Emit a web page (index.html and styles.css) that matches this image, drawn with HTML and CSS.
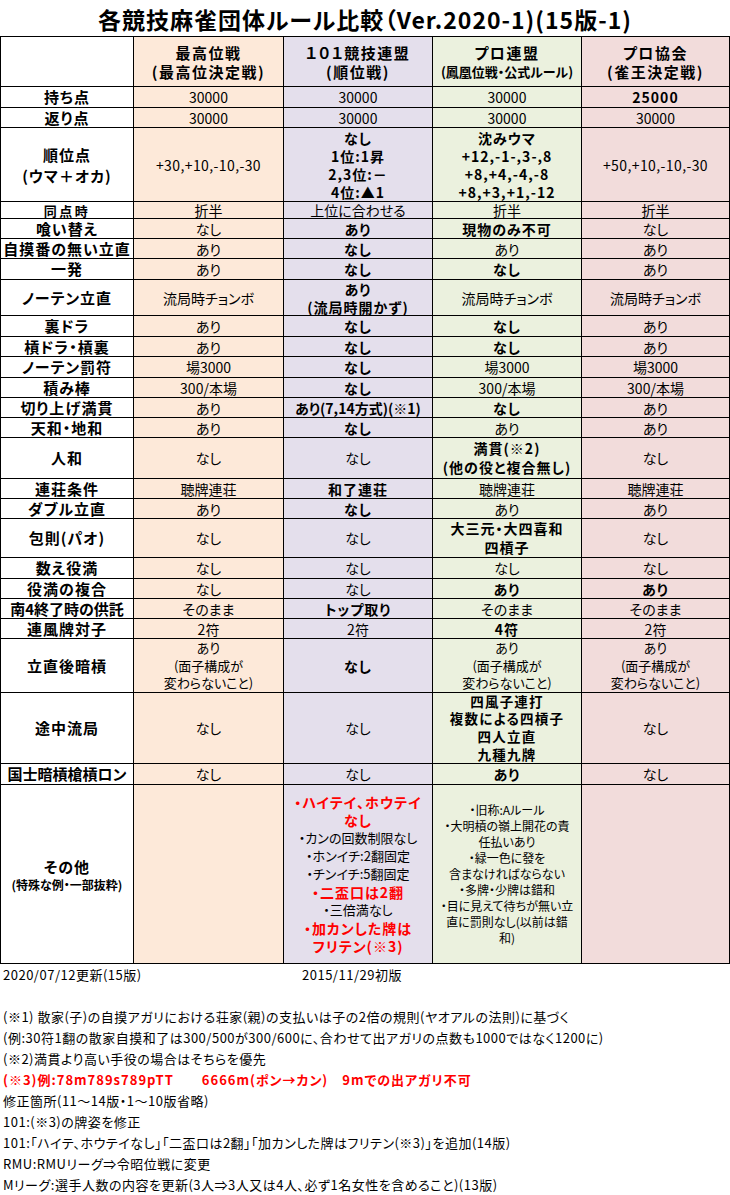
FILE: index.html
```html
<!DOCTYPE html>
<html lang="ja">
<head>
<meta charset="utf-8">
<title>各競技麻雀団体ルール比較</title>
<link rel="stylesheet" href="styles.css">
</head>
<body>
<h1 class="title">各競技麻雀団体ルール比較（Ver.2020-1)(15版-1)</h1>
<div class="sheet">
  <div class="cell lab"></div>
  <div class="cell c1 head"><span>最高位戦</span><span>(最高位決定戦)</span></div>
  <div class="cell c2 head"><span>１０１競技連盟</span><span>(順位戦)</span></div>
  <div class="cell c3 head"><span>プロ連盟</span><span class="small">(鳳凰位戦・公式ルール)</span></div>
  <div class="cell c4 head"><span>プロ協会</span><span>(雀王決定戦)</span></div>

  <div class="cell lab">持ち点</div>
  <div class="cell c1">30000</div>
  <div class="cell c2">30000</div>
  <div class="cell c3">30000</div>
  <div class="cell c4 b">25000</div>

  <div class="cell lab">返り点</div>
  <div class="cell c1">30000</div>
  <div class="cell c2">30000</div>
  <div class="cell c3">30000</div>
  <div class="cell c4">30000</div>

  <div class="cell lab lh20"><span>順位点</span><span>(ウマ＋オカ)</span></div>
  <div class="cell c1 num">+30,+10,-10,-30</div>
  <div class="cell c2 b"><span>なし</span><span>1位:1昇</span><span>2,3位:－</span><span>4位:▲1</span></div>
  <div class="cell c3 b"><span>沈みウマ</span><span>+12,-1-,3-,8</span><span>+8,+4,-4,-8</span><span>+8,+3,+1,-12</span></div>
  <div class="cell c4 num">+50,+10,-10,-30</div>

  <div class="cell lab short">同点時</div>
  <div class="cell c1">折半</div>
  <div class="cell c2">上位に合わせる</div>
  <div class="cell c3">折半</div>
  <div class="cell c4">折半</div>

  <div class="cell lab">喰い替え</div>
  <div class="cell c1">なし</div>
  <div class="cell c2 b">あり</div>
  <div class="cell c3 b">現物のみ不可</div>
  <div class="cell c4">なし</div>

  <div class="cell lab">自摸番の無い立直</div>
  <div class="cell c1">あり</div>
  <div class="cell c2 b">なし</div>
  <div class="cell c3">あり</div>
  <div class="cell c4">あり</div>

  <div class="cell lab">一発</div>
  <div class="cell c1">あり</div>
  <div class="cell c2 b">なし</div>
  <div class="cell c3 b">なし</div>
  <div class="cell c4">あり</div>

  <div class="cell lab">ノーテン立直</div>
  <div class="cell c1">流局時チョンボ</div>
  <div class="cell c2 b"><span>あり</span><span>(流局時開かず)</span></div>
  <div class="cell c3">流局時チョンボ</div>
  <div class="cell c4">流局時チョンボ</div>

  <div class="cell lab">裏ドラ</div>
  <div class="cell c1">あり</div>
  <div class="cell c2 b">なし</div>
  <div class="cell c3 b">なし</div>
  <div class="cell c4">あり</div>

  <div class="cell lab">槓ドラ・槓裏</div>
  <div class="cell c1">あり</div>
  <div class="cell c2 b">なし</div>
  <div class="cell c3 b">なし</div>
  <div class="cell c4">あり</div>

  <div class="cell lab">ノーテン罰符</div>
  <div class="cell c1">場3000</div>
  <div class="cell c2 b">なし</div>
  <div class="cell c3">場3000</div>
  <div class="cell c4">場3000</div>

  <div class="cell lab">積み棒</div>
  <div class="cell c1">300/本場</div>
  <div class="cell c2 b">なし</div>
  <div class="cell c3">300/本場</div>
  <div class="cell c4">300/本場</div>

  <div class="cell lab">切り上げ満貫</div>
  <div class="cell c1">あり</div>
  <div class="cell c2 b tight">あり(7,14方式)(※1)</div>
  <div class="cell c3 b">なし</div>
  <div class="cell c4">あり</div>

  <div class="cell lab">天和・地和</div>
  <div class="cell c1">あり</div>
  <div class="cell c2 b">なし</div>
  <div class="cell c3">あり</div>
  <div class="cell c4">あり</div>

  <div class="cell lab">人和</div>
  <div class="cell c1">なし</div>
  <div class="cell c2">なし</div>
  <div class="cell c3 b lh19"><span>満貫(※2)</span><span>(他の役と複合無し)</span></div>
  <div class="cell c4">なし</div>

  <div class="cell lab">連荘条件</div>
  <div class="cell c1">聴牌連荘</div>
  <div class="cell c2 b">和了連荘</div>
  <div class="cell c3">聴牌連荘</div>
  <div class="cell c4">聴牌連荘</div>

  <div class="cell lab">ダブル立直</div>
  <div class="cell c1">あり</div>
  <div class="cell c2 b">なし</div>
  <div class="cell c3">あり</div>
  <div class="cell c4">あり</div>

  <div class="cell lab">包則(パオ)</div>
  <div class="cell c1">なし</div>
  <div class="cell c2">なし</div>
  <div class="cell c3 b lh19"><span>大三元・大四喜和</span><span>四槓子</span></div>
  <div class="cell c4">なし</div>

  <div class="cell lab">数え役満</div>
  <div class="cell c1">なし</div>
  <div class="cell c2">なし</div>
  <div class="cell c3">なし</div>
  <div class="cell c4">なし</div>

  <div class="cell lab">役満の複合</div>
  <div class="cell c1">なし</div>
  <div class="cell c2">なし</div>
  <div class="cell c3 b">あり</div>
  <div class="cell c4 b">あり</div>

  <div class="cell lab tight">南4終了時の供託</div>
  <div class="cell c1">そのまま</div>
  <div class="cell c2 b">トップ取り</div>
  <div class="cell c3">そのまま</div>
  <div class="cell c4">そのまま</div>

  <div class="cell lab">連風牌対子</div>
  <div class="cell c1">2符</div>
  <div class="cell c2">2符</div>
  <div class="cell c3 b">4符</div>
  <div class="cell c4">2符</div>

  <div class="cell lab">立直後暗槓</div>
  <div class="cell c1 compact"><span>あり</span><span>(面子構成が</span><span>変わらないこと)</span></div>
  <div class="cell c2 b">なし</div>
  <div class="cell c3 compact"><span>あり</span><span>(面子構成が</span><span>変わらないこと)</span></div>
  <div class="cell c4 compact"><span>あり</span><span>(面子構成が</span><span>変わらないこと)</span></div>

  <div class="cell lab">途中流局</div>
  <div class="cell c1">なし</div>
  <div class="cell c2">なし</div>
  <div class="cell c3 b compact"><span>四風子連打</span><span>複数による四槓子</span><span>四人立直</span><span>九種九牌</span></div>
  <div class="cell c4">なし</div>

  <div class="cell lab tight">国士暗槓槍槓ロン</div>
  <div class="cell c1">なし</div>
  <div class="cell c2">なし</div>
  <div class="cell c3 b">あり</div>
  <div class="cell c4">なし</div>

  <div class="cell lab lh20"><span>その他</span><span class="sub">(特殊な例・一部抜粋)</span></div>
  <div class="cell c1"></div>
  <div class="cell c2 other">
    <span class="red">・ハイテイ、ホウテイ</span>
    <span class="red">なし</span>
    <span>・カンの回数制限なし</span>
    <span>・ホンイチ:2翻固定</span>
    <span>・チンイチ:5翻固定</span>
    <span class="red">・二盃口は2翻</span>
    <span>・三倍満なし</span>
    <span class="red">・加カンした牌は</span>
    <span class="red">フリテン(※3)</span>
  </div>
  <div class="cell c3 misc">
    <span>・旧称:Aルール</span>
    <span>・大明槓の嶺上開花の責</span>
    <span>任払いあり</span>
    <span>・緑一色に發を</span>
    <span>含まなければならない</span>
    <span>・多牌・少牌は錯和</span>
    <span>・目に見えて待ちが無い立</span>
    <span>直に罰則なし(以前は錯</span>
    <span>和)</span>
  </div>
  <div class="cell c4"></div>
</div>
<div class="notes">
  <div class="line"><span class="date">2020/07/12更新(15版)</span><span>2015/11/29初版</span></div>
  <div class="line"></div>
  <div class="line">(※1) 散家(子)の自摸アガリにおける荘家(親)の支払いは子の2倍の規則(ヤオアルの法則)に基づく</div>
  <div class="line">(例:30符1翻の散家自摸和了は300/500が300/600に、合わせて出アガリの点数も1000ではなく1200に)</div>
  <div class="line">(※2)満貫より高い手役の場合はそちらを優先</div>
  <div class="line red">(※3)例:78m789s789pTT　　6666m(ポン→カン)　9mでの出アガリ不可</div>
  <div class="line">修正箇所(11～14版・1～10版省略)</div>
  <div class="line">101:(※3)の牌姿を修正</div>
  <div class="line">101:「ハイテ、ホウテイなし」「二盃口は2翻」「加カンした牌はフリテン(※3)」を追加(14版)</div>
  <div class="line">RMU:RMUリーグ⇒令昭位戦に変更</div>
  <div class="line">Mリーグ:選手人数の内容を更新(3人⇒3人又は4人、必ず1名女性を含めること)(13版)</div>
</div>
</body>
</html>
```

FILE: styles.css
```css
* {
  box-sizing: border-box;
}

body {
  margin: 0;
  width: 730px;
  background: #fff;
  color: #000;
  font-family: "Noto Sans CJK JP", "Noto Sans", sans-serif;
  font-feature-settings: "palt";
}

.title {
  margin: 0;
  height: 36px;
  font-size: 23px;
  font-weight: bold;
  line-height: 38px;
  text-align: center;
  letter-spacing: 1px;
}

.sheet {
  display: grid;
  width: 730px;
  grid-template-columns: 133px 150px 149px 149px 148px;
  grid-template-rows: 50px 21px 20px 74px 17px 20px 20px 21px 36px 21px 20px 21px 20px 20px 20px 41px 20px 20px 39px 21px 20px 20px 20px 54px 71px 21px 179px;
  border-top: 1px solid #000;
  border-left: 1px solid #000;
}

.cell {
  display: flex;
  flex-direction: column;
  align-items: center;
  justify-content: center;
  border-right: 1px solid #000;
  border-bottom: 1px solid #000;
  font-size: 14px;
  line-height: 18px;
  text-align: center;
  white-space: nowrap;
  overflow: visible;
}

.c1 { background: #fde9d9; }
.c2 { background: #e4dfec; }
.c3 { background: #ebf1de; }
.c4 { background: #f2dcdb; }

.num {
  letter-spacing: 0.4px;
}

.lab {
  background: #fff;
  font-size: 15px;
  font-weight: bold;
  letter-spacing: 1px;
}

.lab.tight {
  letter-spacing: 0;
}

.lab.short {
  font-size: 13px;
  letter-spacing: 2.5px;
  line-height: 15px;
}

.lab .sub {
  font-size: 12px;
  letter-spacing: 0;
  line-height: 16px;
}

.head {
  font-size: 15px;
  font-weight: bold;
  letter-spacing: 1.5px;
  line-height: 19px;
}

.head .small {
  font-size: 13px;
  letter-spacing: 0;
}

.b {
  font-weight: bold;
  letter-spacing: 1px;
}

.b.tight {
  letter-spacing: 0;
}

.compact {
  font-size: 13px;
  line-height: 17.75px;
}

.b.compact {
  font-size: 13.5px;
  letter-spacing: 1.2px;
}

.lh19 {
  line-height: 19px;
}

.lh20 {
  line-height: 21px;
}

.red {
  color: #f00;
  font-weight: bold;
  letter-spacing: 1px;
}

.other {
  font-size: 13px;
}

.other .red {
  font-size: 14px;
}

.misc {
  font-size: 12px;
  line-height: 16px;
}

.notes {
  padding-left: 3px;
  font-size: 13px;
  line-height: 21px;
  letter-spacing: 0.5px;
}

.notes .line {
  display: flex;
  height: 21px;
  white-space: nowrap;
}

.notes .line.red {
  letter-spacing: 1px;
}

.notes .date {
  width: 299px;
}
```
